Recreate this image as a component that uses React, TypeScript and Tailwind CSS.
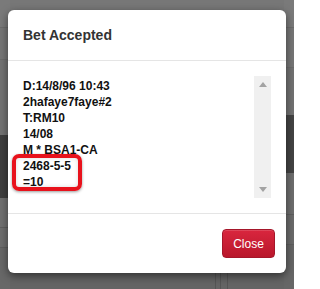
const lines = [
  "D:14/8/96 10:43",
  "2hafaye7faye#2",
  "T:RM10",
  "14/08",
  "M * BSA1-CA",
  "2468-5-5",
  "=10",
];

function Strip({ h, className }: { h: string; className: string }) {
  return <div className={`${h} ${className}`} />;
}

export default function App() {
  return (
    <div
      className="relative w-[294px] h-[289px] overflow-hidden bg-[#767676]"
      style={{ fontFamily: '"Liberation Sans", Arial, sans-serif' }}
    >
      {/* page behind the overlay */}
      <div className="flex h-full">
        <div className="flex flex-col w-[10px]">
          <Strip h="h-[28px]" className="bg-[#7a7a7a] border-b border-[#6c6c6c]" />
          <Strip h="h-[32px]" className="bg-[#767676] border-b border-[#6c6c6c]" />
          <Strip h="h-[75px]" className="bg-[#737373]" />
          <Strip h="h-[63px]" className="bg-[#3f3f3f]" />
          <Strip h="h-[30px]" className="bg-[#707070] border-b border-[#5e5e5e]" />
          <Strip h="h-[20px]" className="bg-[#6e6e6e] border-b border-[#5e5e5e]" />
          <div className="flex-1 bg-[#686868]" />
        </div>
        <div className="flex-1 flex flex-col">
          <div className="flex-1 bg-[#777777]" />
          <div className="h-[20px] bg-[#646464] flex">
            <div className="w-[205px]" />
            <div className="w-px bg-[#555555]" />
            <div className="w-[4px]" />
            <div className="w-px bg-[#555555]" />
            <div className="w-[6px]" />
            <div className="w-px bg-[#555555]" />
          </div>
        </div>
        <div className="flex flex-col w-[10px]">
          <Strip h="h-[28px]" className="bg-[#7a7a7a] border-b border-[#6c6c6c]" />
          <Strip h="h-[40px]" className="bg-[#767676] border-b border-[#6c6c6c]" />
          <Strip h="h-[47px]" className="bg-[#727272]" />
          <Strip h="h-[58px]" className="bg-[#444444]" />
          <Strip h="h-[42px]" className="bg-[#6e6e6e] border-b border-[#5e5e5e]" />
          <Strip h="h-[30px]" className="bg-[#6b6b6b] border-b border-[#5e5e5e]" />
          <div className="flex-1 bg-[#666666]" />
        </div>
      </div>

      {/* modal dialog */}
      <div className="absolute left-[8px] top-[10px] w-[278px] h-[263px] bg-white rounded-[6px] shadow-[0_3px_9px_rgba(0,0,0,0.5)] flex flex-col">
        <div className="h-[51px] px-[15px] flex items-center border-b border-[#e5e5e5]">
          <h4 className="text-[14px] leading-5 font-bold text-[#333333]">Bet Accepted</h4>
        </div>
        <div className="p-[15px] border-b border-[#e5e5e5]">
          <div className="flex h-[122px]">
            <div className="flex-1 pt-[2px] text-[12px] leading-4 font-bold text-[#111111]">
              {lines.map((l) => (
                <div key={l}>{l}</div>
              ))}
            </div>
            <div className="w-[17px] bg-[#f0f0f0] flex flex-col items-center justify-between py-[6px]">
              <svg width="8" height="5" viewBox="0 0 8 5">
                <path d="M4 0 L8 5 L0 5 Z" fill="#a3a3a3" />
              </svg>
              <svg width="8" height="5" viewBox="0 0 8 5">
                <path d="M0 0 L8 0 L4 5 Z" fill="#a3a3a3" />
              </svg>
            </div>
          </div>
        </div>
        <div className="flex-1 flex items-start justify-end pt-[15px] pr-[11px]">
          <button className="h-[29px] w-[53px] rounded-[4px] border border-[#a5162a] bg-gradient-to-b from-[#d9263e] to-[#b9172b] text-white text-[12px] shadow-[inset_0_1px_0_rgba(255,255,255,0.15)]">
            Close
          </button>
        </div>
      </div>

      {/* highlight annotation */}
      <div className="absolute left-[12px] top-[154px] w-[70px] h-[37px] border-4 border-[#e8121c] rounded-[7px] shadow-[0_1px_3px_rgba(0,0,0,0.4),inset_0_0_4px_rgba(0,0,0,0.15)]" />
    </div>
  );
}
